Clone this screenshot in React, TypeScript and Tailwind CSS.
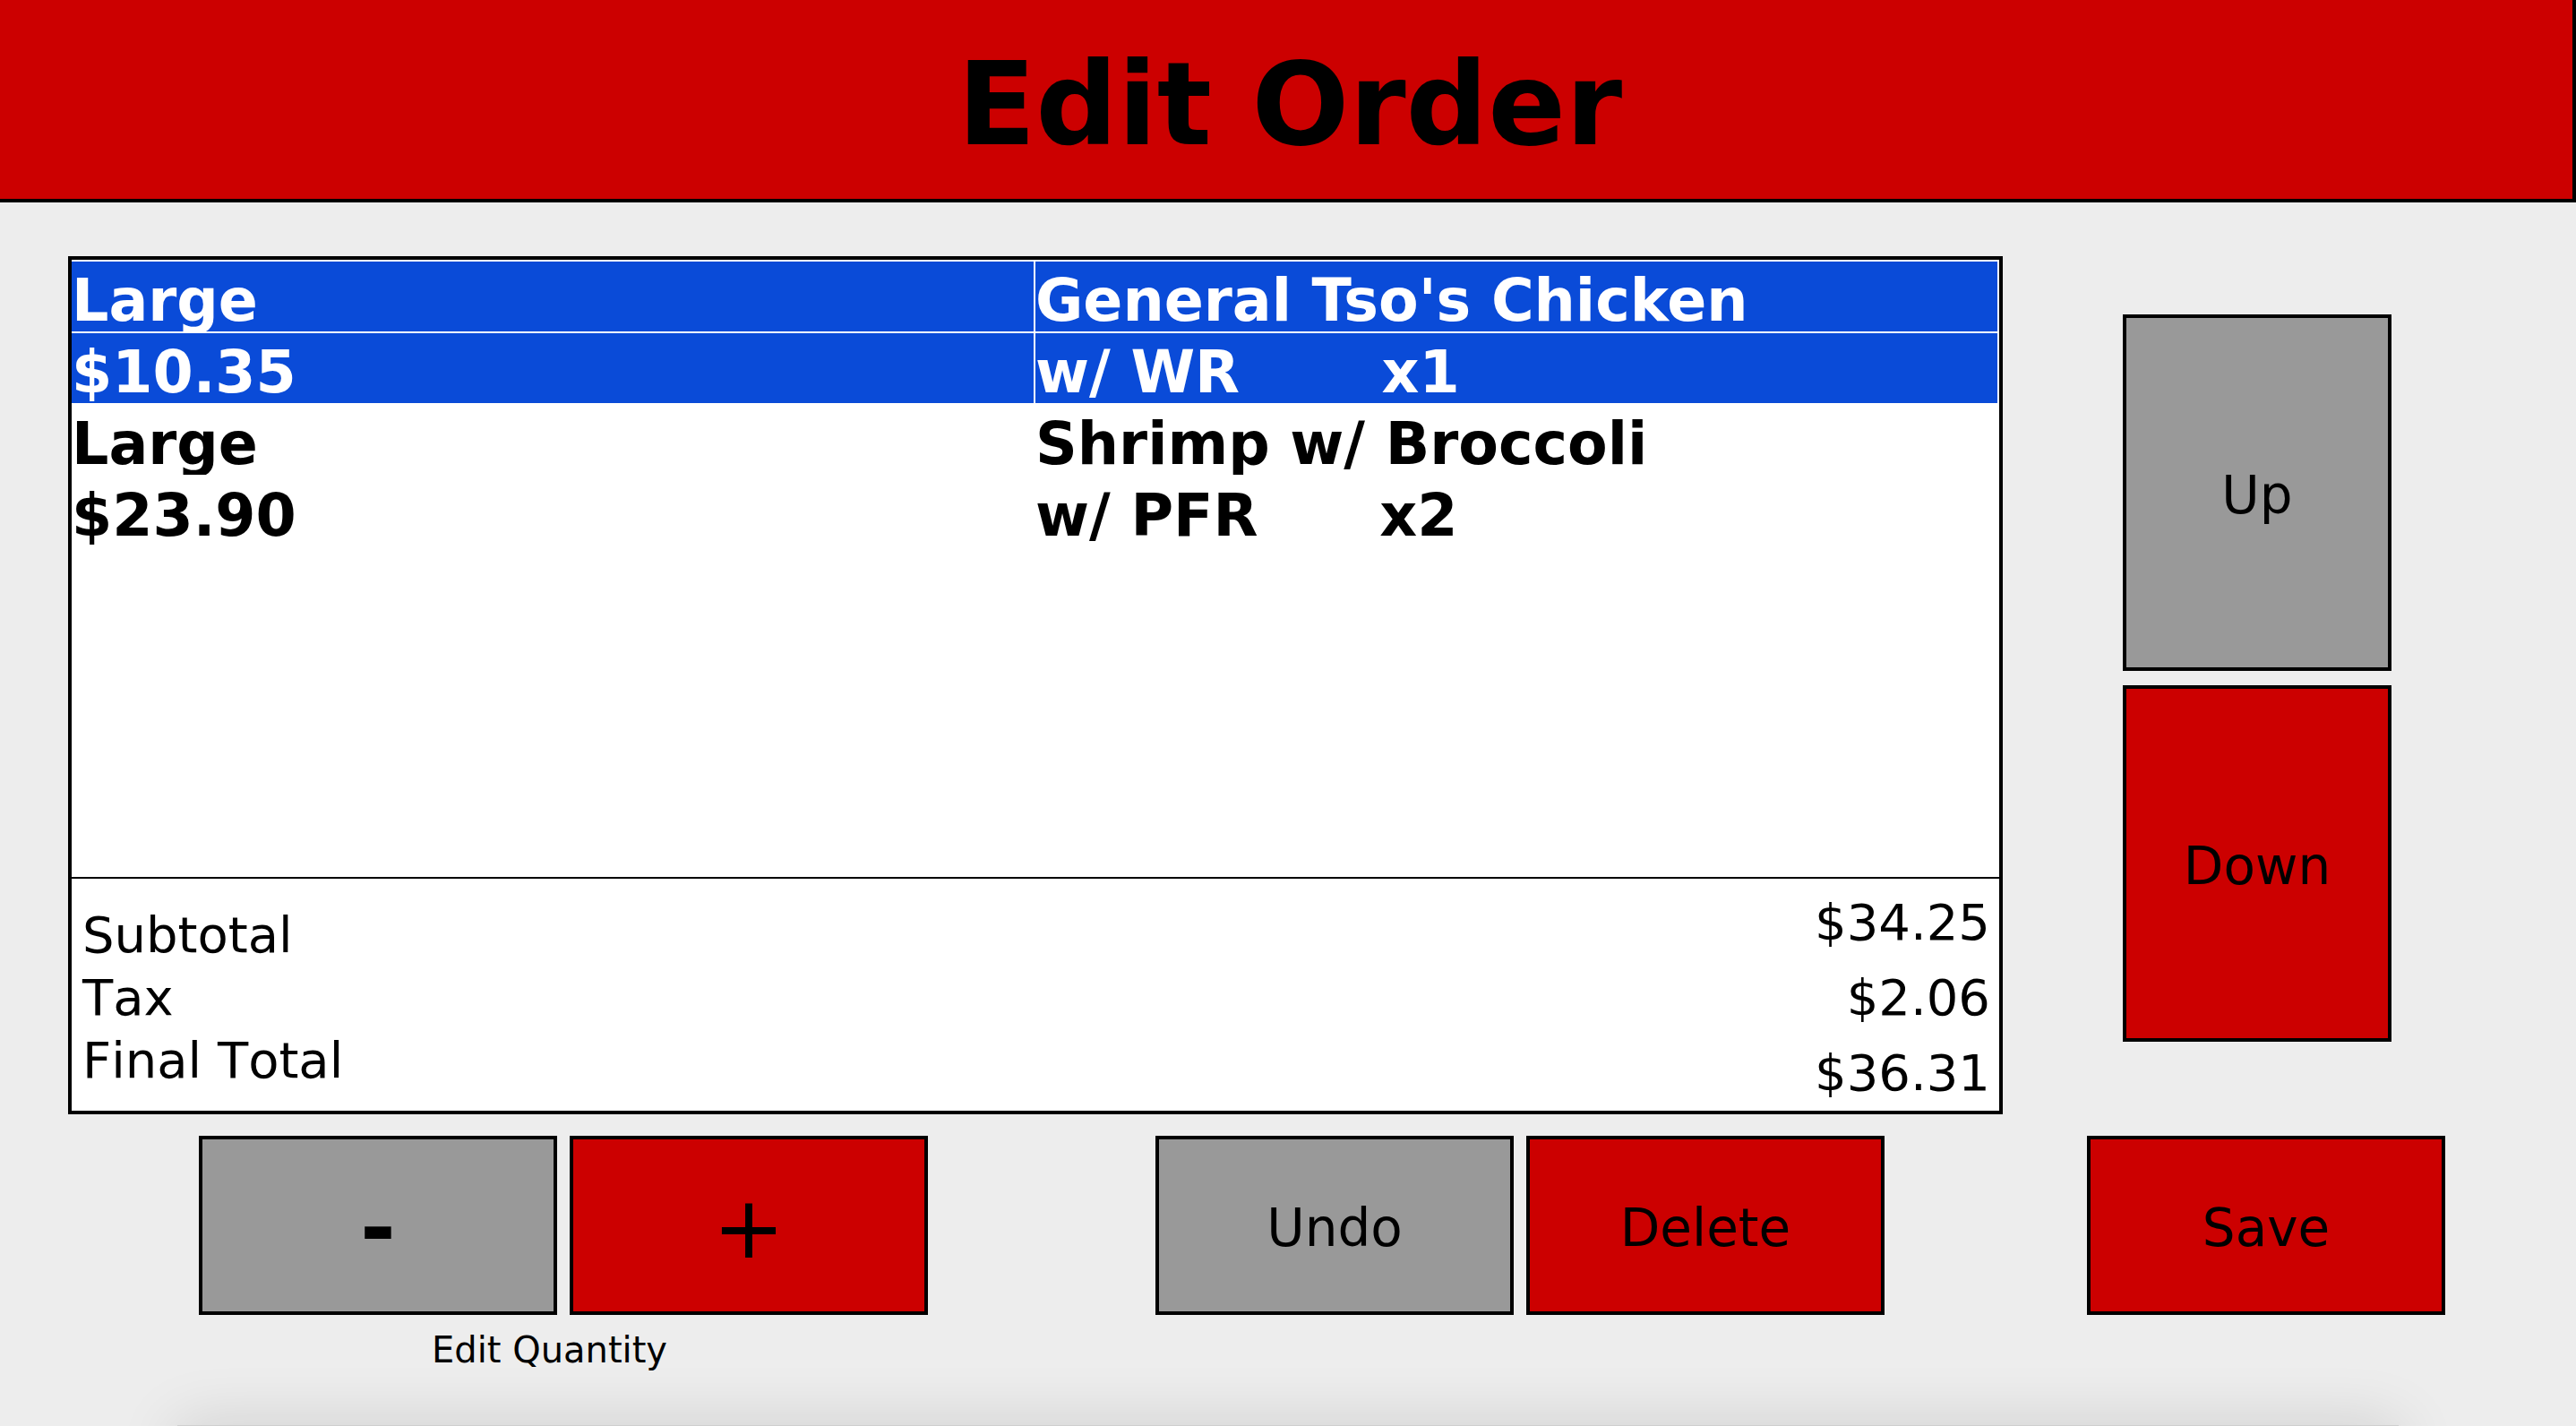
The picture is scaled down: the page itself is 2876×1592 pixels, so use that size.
import React from "react";

type Item = { size: string; name: string; price: string; side: string; qty: number };

const items: Item[] = [
  { size: "Large", name: "General Tso's Chicken", price: "$10.35", side: "w/ WR", qty: 1 },
  { size: "Large", name: "Shrimp w/ Broccoli", price: "$23.90", side: "w/ PFR", qty: 2 },
];

const totals = [
  { label: "Subtotal", value: "$34.25" },
  { label: "Tax", value: "$2.06" },
  { label: "Final Total", value: "$36.31" },
];

function Cell({ selected, children }: { selected: boolean; children: React.ReactNode }) {
  return (
    <div
      className={`w-1/2 h-[80px] border-t-2 border-r-2 whitespace-pre font-bold text-[65px] leading-[88px] [font-kerning:normal] ${
        selected ? "bg-[#0a4bd8] text-white border-white" : "bg-white text-black border-transparent"
      }`}
    >
      {children}
    </div>
  );
}

function Button({
  label,
  color,
  className = "",
  textClass = "text-[58px] pt-[6px]",
}: {
  label: string;
  color: "gray" | "red";
  className?: string;
  textClass?: string;
}) {
  return (
    <button
      className={`flex items-center justify-center border-4 border-black text-black ${textClass} ${
        color === "gray" ? "bg-[#999999]" : "bg-[#cc0000]"
      } ${className}`}
    >
      {label}
    </button>
  );
}

export default function App() {
  const selected = 0;

  return (
    <div className="h-screen w-full overflow-hidden flex flex-col bg-[#ededed] font-['DejaVu_Sans',sans-serif] [font-kerning:none] text-black">
      {/* Header */}
      <header className="h-[226px] shrink-0 bg-[#cc0000] border-b-4 border-r-4 border-black flex justify-center pt-[21px] pl-2">
        <h1 className="text-[128px] font-bold">Edit Order</h1>
      </header>

      {/* Order list + up/down */}
      <div className="flex pt-[60px]">
        <div className="ml-[76px] w-[2160px] h-[958px] border-4 border-black bg-white flex flex-col">
          <div className="h-[690px]">
            {items.map((it, i) => (
              <div key={i}>
                <div className="flex">
                  <Cell selected={i === selected}>{it.size}</Cell>
                  <Cell selected={i === selected}>{it.name}</Cell>
                </div>
                <div className="flex">
                  <Cell selected={i === selected}>{it.price}</Cell>
                  <Cell selected={i === selected}>{it.side.padEnd(12, " ") + "x" + it.qty}</Cell>
                </div>
              </div>
            ))}
          </div>
          <div className="h-[2px] bg-black" />
          <div className="flex-1 flex justify-between text-[56px]">
            <div className="pl-3 pt-[28px] leading-[70px]">
              {totals.map((t) => (
                <div key={t.label}>{t.label}</div>
              ))}
            </div>
            <div className="pr-[10px] pt-[7px] leading-[84px] text-right">
              {totals.map((t) => (
                <div key={t.label}>{t.value}</div>
              ))}
            </div>
          </div>
        </div>

        <div className="ml-[134px] pt-[65px] flex flex-col gap-4">
          <Button label="Up" color="gray" className="w-[300px] h-[398px]" />
          <Button label="Down" color="red" className="w-[300px] h-[398px]" />
        </div>
      </div>

      {/* Bottom buttons */}
      <div className="flex mt-[24px]">
        <Button label="-" color="gray" className="ml-[222px] w-[400px] h-[200px]" textClass="text-[96px] font-bold pt-[6px]" />
        <Button label="+" color="red" className="ml-[14px] w-[400px] h-[200px]" textClass="text-[96px] pt-[6px]" />
        <Button label="Undo" color="gray" className="ml-[254px] w-[400px] h-[200px]" />
        <Button label="Delete" color="red" className="ml-[14px] w-[400px] h-[200px]" />
        <Button label="Save" color="red" className="ml-[226px] w-[400px] h-[200px]" />
      </div>
      <div className="ml-[482px] mt-[9px] text-[40px]">Edit Quantity</div>

      {/* bottom panel edge */}
      <div className="mt-auto mx-[198px] -mb-[60px] h-[61px] shrink-0 bg-[#e6e6e6] border-t border-[#cfcfcf] shadow-[0_0_70px_rgba(0,0,0,0.14)]" />
    </div>
  );
}
